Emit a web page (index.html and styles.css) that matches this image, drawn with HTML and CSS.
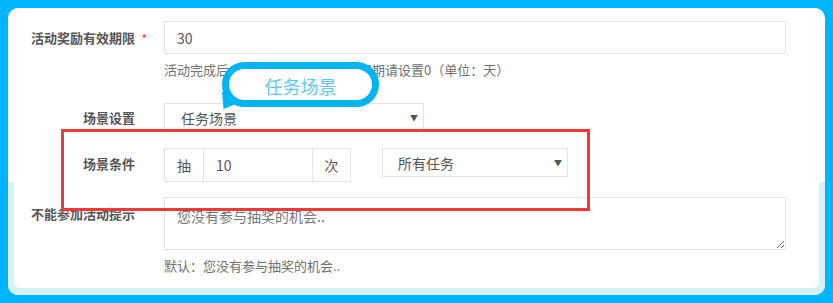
FILE: index.html
```html
<!DOCTYPE html>
<html lang="zh-CN">
<head>
    <meta charset="UTF-8">
    <meta name="viewport" content="width=device-width, initial-scale=1.0">
    <title>场景设置</title>
    <link rel="stylesheet" href="styles.css">
</head>
<body>
    <div class="panel">
        <div class="top">
            <div class="row">
                <label class="label" for="valid-days">活动奖励有效期限<span class="star">*</span></label>
                <div class="field">
                    <input class="input wide" type="text" id="valid-days" value="30">
                    <p class="help help-days">活动完成后，奖品有效期天数，无限期请设置0（单位：天）</p>
                </div>
            </div>

            <div class="row row-scene">
                <label class="label label-select">场景设置</label>
                <div class="select-box scene">
                    <select class="select">
                        <option>任务场景</option>
                    </select>
                    <span class="arrow">▼</span>
                </div>
            </div>

            <div class="row row-cond">
                <label class="label label-cond">场景条件</label>
                <div class="group">
                    <span class="addon">抽</span>
                    <input class="group-input" type="text" value="10">
                    <span class="addon last">次</span>
                </div>
                <div class="select-box task">
                    <select class="select">
                        <option>所有任务</option>
                    </select>
                    <span class="arrow">▼</span>
                </div>
            </div>
        </div>

        <div class="bottom">
            <div class="bottom-inner">
                <div class="row">
                    <label class="label label-tip" for="tip">不能参加活动提示</label>
                    <div class="field">
                        <textarea class="textarea" id="tip" placeholder="您没有参与抽奖的机会.."></textarea>
                        <p class="help">默认：您没有参与抽奖的机会..</p>
                    </div>
                </div>
            </div>
        </div>

        <div class="bubble">任务场景</div>
        <div class="mark"></div>
    </div>
</body>
</html>
```

FILE: styles.css
```css
* {
    box-sizing: border-box;
}

body {
    margin: 0;
    padding: 8px;
    background-color: #00b5ff;
    font-family: "Noto Sans CJK SC", "Liberation Sans", sans-serif;
    color: #555;
}

.panel {
    position: relative;
    background-color: #fff;
    border-radius: 10px;
    overflow: hidden;
}

.top {
    padding-top: 13px;
}

.row {
    display: flex;
    align-items: flex-start;
}

.label {
    position: relative;
    width: 142px;
    height: 33px;
    padding-right: 15px;
    margin-right: 14px;
    display: flex;
    align-items: center;
    justify-content: flex-end;
    font-size: 13px;
    font-weight: bold;
    color: #555;
    white-space: nowrap;
}

.star {
    position: absolute;
    right: 3px;
    top: 9px;
    font-size: 12px;
    font-weight: normal;
    color: #e8322e;
}

.label-select {
    height: 29px;
}

.label-cond {
    height: 30px;
}

.label-tip {
    width: 136px;
}

.input {
    display: block;
    height: 33px;
    padding: 0 12px;
    border: 1px solid #e3e3e3;
    font-family: inherit;
    font-size: 14px;
    color: #555;
    outline: none;
}

.wide {
    width: 622px;
}

.help {
    margin: 7px 0 0;
    font-size: 13px;
    line-height: 18px;
    color: #707070;
    text-spacing-trim: space-all;
    font-feature-settings: "halt" 0, "chws" 0;
}

.help-days {
    margin-top: 8px;
    line-height: 16px;
}

.row-scene {
    margin-top: 25px;
}

.row-cond {
    margin-top: 16px;
}

.select-box {
    display: flex;
    align-items: center;
    height: 29px;
    border: 1px solid #e3e3e3;
    background-color: #fff;
}

.select {
    flex: 1;
    height: 100%;
    border: none;
    background: transparent;
    -webkit-appearance: none;
    appearance: none;
    font-family: inherit;
    font-size: 14px;
    color: #555;
    outline: none;
}

.arrow {
    font-size: 8px;
    color: #555;
    padding-right: 5px;
}

.scene {
    width: 260px;
}

.scene .select {
    padding-left: 16px;
}

.task {
    width: 186px;
    margin-left: 31px;
}

.task .select {
    padding-left: 15px;
}

.group {
    display: flex;
    height: 34px;
    border: 1px solid #e3e3e3;
}

.addon {
    width: 39px;
    display: flex;
    align-items: center;
    justify-content: center;
    border-right: 1px solid #e3e3e3;
    font-size: 14px;
    color: #555;
}

.addon.last {
    width: 38px;
    border-right: none;
    border-left: 1px solid #e3e3e3;
}

.group-input {
    width: 108px;
    border: none;
    padding: 0 12px;
    font-family: inherit;
    font-size: 14px;
    color: #555;
    outline: none;
}

.bottom {
    background-color: #d5f1fc;
    padding: 0 6px 7px;
}

.bottom-inner {
    background-color: #fff;
    border-radius: 0 0 6px 6px;
    padding: 15px 0 13px;
}

.textarea {
    display: block;
    width: 622px;
    height: 53px;
    padding: 8px 12px;
    border: 1px solid #e3e3e3;
    font-family: inherit;
    font-size: 14px;
    line-height: 20px;
    color: #555;
    outline: none;
}

.textarea::placeholder {
    color: #777;
}

/* annotation overlays */
.bubble {
    position: absolute;
    left: 214px;
    top: 54px;
    width: 157px;
    height: 45px;
    border: 7px solid #00b4f2;
    border-radius: 23px;
    background-color: #fff;
    display: flex;
    align-items: center;
    justify-content: center;
    padding-top: 2px;
    font-size: 18px;
    line-height: 16px;
    color: #62c6f0;
    z-index: 2;
}

.bubble::before {
    content: "";
    position: absolute;
    left: -7px;
    top: 22px;
    width: 15px;
    height: 18px;
    background-color: #00b4f2;
    clip-path: polygon(0 0, 100% 70%, 10% 100%);
}

.mark {
    position: absolute;
    left: 53px;
    top: 121px;
    width: 529px;
    height: 82px;
    border: 3px solid #f03a3a;
    z-index: 3;
}
```
